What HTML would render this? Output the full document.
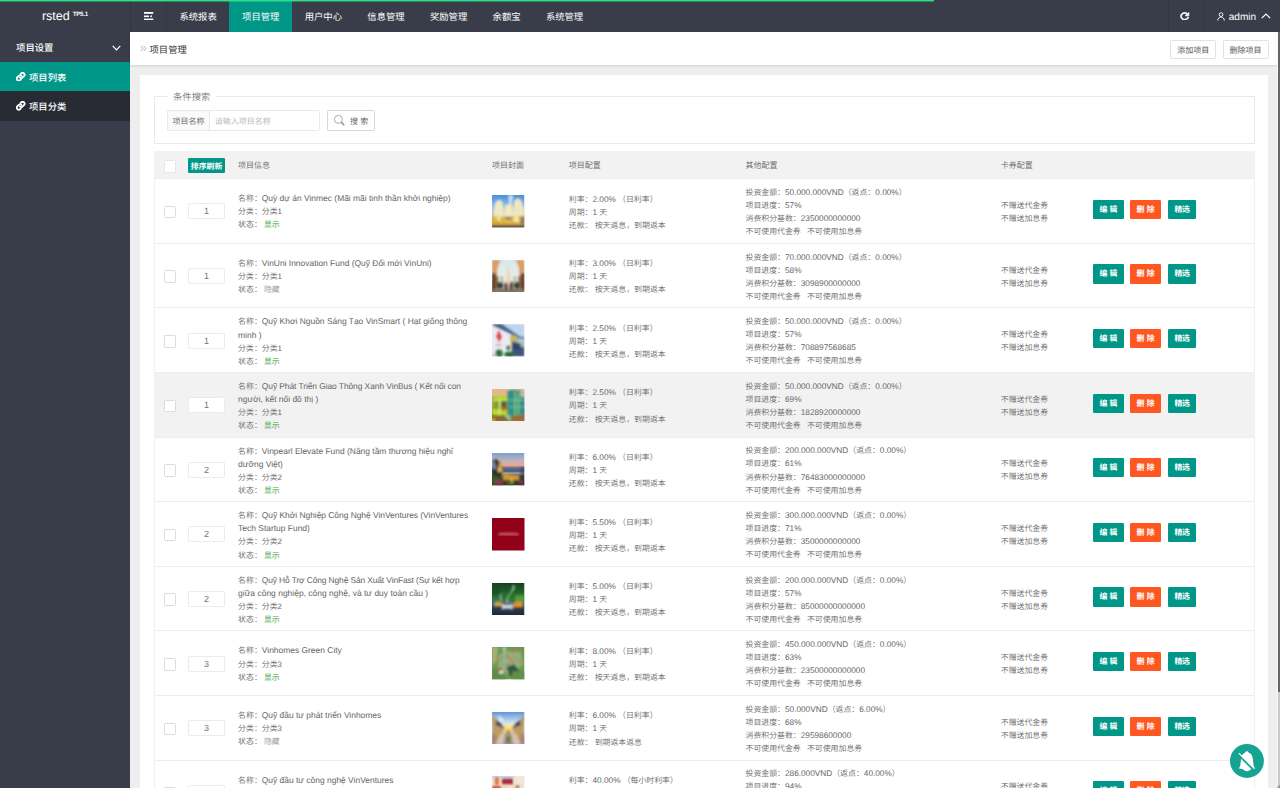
<!DOCTYPE html>
<html lang="zh-CN">
<head>
<meta charset="utf-8">
<title>项目管理</title>
<style>
*{box-sizing:border-box;margin:0;padding:0}
html,body{width:1280px;height:788px;overflow:hidden;background:#eee}
body{position:relative;font-family:"Liberation Sans","Noto Sans CJK SC",sans-serif;font-size:8px;color:#666;line-height:13.33px;-webkit-text-size-adjust:none;text-rendering:geometricPrecision}
a{color:inherit;text-decoration:none}
/* ---------- header ---------- */
#hdr{position:absolute;left:0;top:0;width:1280px;height:32px;background:#393d49;color:#fff}
#prog{position:absolute;left:0;top:0;width:934px;height:2px;background:linear-gradient(#2ee083 0,#2ee083 1px,rgba(46,224,131,.45) 1px,rgba(46,224,131,.45) 2px);z-index:5}
#logo{position:absolute;left:-1.6px;top:0;width:130px;height:32px;line-height:32px;text-align:center;font-size:12.5px;color:#fff}
#logo sup{font-size:6.2px;font-weight:bold;position:relative;top:.9px;left:3px;vertical-align:super;line-height:0;letter-spacing:-.25px}
.vdiv{position:absolute;top:0;width:1px;height:32px;background:rgba(0,0,0,.11)}
#burger{position:absolute;left:144.2px;top:11.8px;width:9.4px;height:8.4px}
#nav{position:absolute;left:166.8px;top:0;height:32px;display:flex}
#nav a{display:block;height:32px;line-height:34.4px;padding:0 12.67px;font-size:9.33px;color:#fff;white-space:nowrap}
#nav a.on{background:#009688}
#refresh{position:absolute;left:1180.4px;top:11.7px;width:9.4px;height:8.6px}
#user{position:absolute;left:1217px;top:0;height:32px;line-height:35px;font-size:10.1px;color:#fff;white-space:nowrap}
#user svg{position:absolute}
/* ---------- sidebar ---------- */
#side{position:absolute;left:0;top:32px;width:130px;height:756px;background:#393d49;color:#fff;font-size:9.33px}
#side .it{position:relative;height:29.4px;line-height:31.4px;padding-left:16.1px;white-space:nowrap;font-weight:500}
#side .it:first-child{height:29.9px;line-height:33.4px}
#side .it.on{line-height:32.4px}
#side .it:nth-child(3){line-height:33.8px}
#side .sub{background:#282b33}
#side .on{background:#009688}
#side .it svg.lk{position:absolute;left:16.3px;top:10.2px;width:9.4px;height:9.4px}
#side .sub span{margin-left:12.9px}
#side .chev{position:absolute;left:112px;top:12.6px;width:9px;height:6px}
/* ---------- main ---------- */
#title{position:absolute;left:130px;top:32px;width:1148px;height:33px;background:#fff;box-shadow:0 1px 2px rgba(0,0,0,.12)}
#title .t{position:absolute;left:19.5px;top:0;line-height:36.8px;font-size:9.33px;color:#333}
#title .arr{position:absolute;left:10px;top:13.3px;width:7px;height:7px}
.tbtn{position:absolute;top:8px;height:19px;line-height:19.4px;border:1px solid #e2e2e2;border-radius:1.3px;background:#fff;color:#555;font-size:8px;text-align:center;white-space:nowrap}
#card{position:absolute;left:140px;top:75px;width:1128px;height:760px;background:#fff;font-weight:350}
#fs{position:absolute;left:13.5px;top:21.3px;width:1101.5px;height:48.2px;border:1px solid #e9e9e9}
#fs .lg{position:absolute;left:13px;top:-6.6px;height:13px;line-height:13px;padding:0 5.5px;background:#fff;font-size:9.33px;color:#777}
#fs .grp{position:absolute;left:12.6px;top:13px;width:152.9px;height:20.6px;border:1px solid #e9e9e9;border-radius:1.3px;background:#fff}
#fs .grp .lb{position:absolute;left:0;top:0;width:42px;height:18.6px;line-height:21.8px;background:#fafafa;border-right:1px solid #e9e9e9;text-align:center;color:#606060;font-size:8px}
#fs .grp .ph{position:absolute;left:46.6px;top:0;line-height:21.6px;color:#b5b5b5;font-size:8px}
#fs .sbtn{position:absolute;left:172.6px;top:13px;width:47.8px;height:20.6px;border:1px solid #d8d8d8;border-radius:1.3px;background:#fff;color:#5a5a5a;font-size:8px;line-height:21.2px}
#fs .sbtn svg{position:absolute;left:6.4px;top:3.8px;width:11px;height:11px}
#fs .sbtn span{position:absolute;left:22px;top:0}
/* ---------- table ---------- */
#tb{position:absolute;left:13.5px;top:76px;width:1101.5px}
#tb:before,#tb:after{content:'';position:absolute;top:0;bottom:0;width:1px;background:#f0f0f0;left:0;z-index:2}
#tb:after{left:auto;right:0}
#th{position:relative;height:28.3px;background:#f2f2f2;line-height:30.8px;color:#666;border-bottom:1px solid #ececec}
#th span{position:absolute;top:0;white-space:nowrap}
.cb{position:absolute;left:10px;width:12.6px;height:12.6px;border:1px solid #dcdcdc;border-radius:1.3px;background:#fff}
#th .cb{top:9px;border-color:#e6e6e6}
#th .sort{position:absolute;left:34.8px;top:7.2px;width:36.6px;height:14.9px;line-height:17.2px;background:#009688;color:#fff;border-radius:1.3px;text-align:center;font-weight:bold;font-size:7.9px;letter-spacing:0}
.row{position:relative;height:64.6px;border-bottom:1px solid #ededed;white-space:nowrap}
.row.hv{background:#f2f2f2}
.row .cb{top:26.6px}
.row .num{position:absolute;left:34.7px;top:24.1px;width:36.4px;height:16px;line-height:15px;font-size:9px;border:1px solid #ebebeb;border-radius:1.3px;background:#fff;text-align:center;color:#747474}
.row .c{position:absolute;top:50%;transform:translateY(-50%);margin-top:1.5px;line-height:13.1px;font-size:7.9px}
.c3{left:84.6px}.c5{left:415.3px}.c6{left:592px}.c7{left:847.3px}
.row .c6{margin-top:.9px}.row .c7{margin-top:.9px}.row .c3{margin-top:1.2px}.row .c5{margin-top:1.5px}
.row .im{position:absolute;left:338.5px;top:15.8px;width:32.5px;height:32.5px;display:block}
.vn{font-size:8.45px}.d{font-size:8.25px}.sp{margin-left:6.2px}
.g{color:#3aa63a}.h{color:#999}
.bt{position:absolute;top:20.5px;height:19.3px;line-height:19.3px;border-radius:1.3px;color:#fff;text-align:center;font-weight:bold;font-size:7.9px}
.b1{left:939.3px;width:31.3px;background:#009688}
.b2{left:976.8px;width:30.6px;background:#ff5722}
.b3{left:1014.3px;width:28.6px;background:#009688;letter-spacing:-.3px}
/* ---------- misc ---------- */
#sbar{position:absolute;left:1277px;top:32px;width:3px;height:756px;background:#c9c9c9;border-left:1px solid #f7f7f7}
#sbar i{position:absolute;left:0;top:0;width:2px;height:660px;background:#666}
#corner{position:absolute;left:1276px;top:784px;width:4px;height:4px;background:linear-gradient(135deg,rgba(122,142,160,0) 45%,#7f93a6 75%)}
#fab{position:absolute;left:1229.9px;top:744px;width:33.9px;height:33.9px;z-index:10}
</style>
</head>
<body>
<div id="hdr">
  <div id="prog"></div>
  <div id="logo">rsted<sup>TP5.1</sup></div>
  <div class="vdiv" style="left:130px"></div>
  <svg id="burger" viewBox="0 0 9.4 8.4"><g fill="#fff"><rect x="0" y="0" width="9.3" height="1.8"/><rect x="0" y="3.5" width="5" height="1.6"/><rect x="0" y="6.6" width="9.3" height="1.7"/><path d="M7.9 3v2.6L5.8 4.3z"/></g></svg>
  <div class="vdiv" style="left:166px"></div>
  <div id="nav"><a>系统报表</a><a class="on">项目管理</a><a>用户中心</a><a>信息管理</a><a>奖励管理</a><a>余额宝</a><a>系统管理</a></div>
  <div class="vdiv" style="left:1168px"></div>
  <svg id="refresh" viewBox="3 3 18 18" preserveAspectRatio="none"><path fill="#fff" stroke="#fff" stroke-width="1.5" stroke-linejoin="round" d="M17.65 6.35C16.2 4.9 14.21 4 12 4c-4.42 0-7.99 3.58-7.99 8s3.57 8 7.99 8c3.73 0 6.84-2.55 7.73-6h-2.08c-.82 2.33-3.04 4-5.65 4-3.31 0-6-2.69-6-6s2.69-6 6-6c1.66 0 3.14.69 4.22 1.78L13 11h7V4l-2.35 2.35z"/></svg>
  <div class="vdiv" style="left:1203px"></div>
  <div id="user">
    <svg style="left:.4px;top:11.6px;width:8.1px;height:9px" viewBox="0 0 9 10"><circle cx="4.5" cy="2.9" r="2.1" fill="none" stroke="#fff" stroke-width="1"/><path d="M0.9 9.6C0.9 7.1 2.4 5.6 4.5 5.6S8.1 7.1 8.1 9.6" fill="none" stroke="#fff" stroke-width="1"/></svg>
    <span style="margin-left:11.7px">admin</span>
    <svg style="left:44px;top:13.2px;width:10px;height:6px" viewBox="0 0 10 6"><path d="M0.8 5.2L5 1l4.2 4.2" fill="none" stroke="#fff" stroke-width="1.2"/></svg>
  </div>
</div>

<div id="side">
  <div class="it">项目设置<svg class="chev" viewBox="0 0 9 6"><path d="M0.7 0.8L4.5 4.8L8.3 0.8" fill="none" stroke="#fff" stroke-width="1.2"/></svg></div>
  <div class="it sub on"><svg class="lk" viewBox="0 0 24 24"><g fill="none" stroke="#fff" stroke-width="4.6" stroke-linecap="round"><path d="M10 14a5 5 0 0 0 7.1 0l3.4-3.4a5 5 0 0 0-7.1-7.1l-1.6 1.6"/><path d="M14 10a5 5 0 0 0-7.1 0l-3.4 3.4a5 5 0 0 0 7.1 7.1l1.6-1.6"/></g></svg><span>项目列表</span></div>
  <div class="it sub"><svg class="lk" viewBox="0 0 24 24"><g fill="none" stroke="#fff" stroke-width="4.6" stroke-linecap="round"><path d="M10 14a5 5 0 0 0 7.1 0l3.4-3.4a5 5 0 0 0-7.1-7.1l-1.6 1.6"/><path d="M14 10a5 5 0 0 0-7.1 0l-3.4 3.4a5 5 0 0 0 7.1 7.1l1.6-1.6"/></g></svg><span>项目分类</span></div>
</div>

<div id="title">
  <svg class="arr" viewBox="0 0 7 7"><path d="M0.6 0.8L3 3.5L0.6 6.2M3.6 0.8L6 3.5L3.6 6.2" fill="none" stroke="#aaa" stroke-width="0.9"/></svg>
  <div class="t">项目管理</div>
  <div class="tbtn" style="left:1040.4px;width:45.5px">添加项目</div>
  <div class="tbtn" style="left:1092.5px;width:46px">删除项目</div>
</div>

<div id="card">
  <div id="fs">
    <div class="lg">条件搜索</div>
    <div class="grp"><div class="lb">项目名称</div><div class="ph">请输入项目名称</div></div>
    <div class="sbtn"><svg viewBox="0 0 11 11"><circle cx="4.4" cy="4.4" r="4" fill="none" stroke="#999" stroke-width="0.8"/><path d="M7.3 7.3L10.3 10.3" stroke="#888" stroke-width="1.3"/></svg><span>搜 索</span></div>
  </div>
  <div id="tb">
    <div id="th"><div class="cb"></div><div class="sort">排序刷新</div><span style="left:84.6px">项目信息</span><span style="left:338.5px">项目封面</span><span style="left:415.3px">项目配置</span><span style="left:592px">其他配置</span><span style="left:847.3px">卡券配置</span></div>
    <div class="row"><div class="cb"></div><div class="num">1</div>
      <div class="c c3">名称：<span class="vn">Quỳ dự án Vinmec (Mãi mãi tinh thần khởi nghiệp)</span><br>分类：分类1<br>状态： <span class="g">显示</span></div>
      <svg class="im" viewBox="0 0 32 32"><defs><linearGradient id="t1" x1="0" y1="0" x2="0" y2="1"><stop offset="0" stop-color="#4a8edb"/><stop offset=".45" stop-color="#a6cdf0"/><stop offset=".68" stop-color="#d8b848"/><stop offset=".92" stop-color="#c99c2e"/><stop offset="1" stop-color="#5d5348"/></linearGradient><filter id="bl"><feGaussianBlur stdDeviation=".85"/></filter><clipPath id="cp"><rect width="32" height="32"/></clipPath></defs><g clip-path="url(#cp)"><rect width="32" height="32" fill="url(#t1)"/><g filter="url(#bl)"><path d="M16 0h5l-2 11h-2z" fill="#d6eaf8" opacity=".85"/><path d="M1 25L3 8l3-3l4 1l3 19z" fill="#efe9c4"/><path d="M12 27l1-17l3-1l4 1l1 17z" fill="#f2ebbc"/><path d="M20 25l2-20l4-2l3 3l3 9v10z" fill="#eee6be"/><path d="M0 21h32v8H0z" fill="#d8aa30" opacity=".7"/><path d="M5 25l2-7l3 8zM21 26l3-8l3 9z" fill="#f5eab0"/><path d="M8 22h3v6H8zM17 23h3v5h-3z" fill="#e2b93c"/><rect x="13" y="22" width="6" height="2" fill="#5f6f9a"/><rect x="0" y="30" width="32" height="2" fill="#4e4a48"/><rect x="28" y="21" width="4" height="8" fill="#6d6a7a" opacity=".7"/></g></g></svg>
      <div class="c c5">利率：<span class="d">2.00%</span> （日利率）<br>周期：<span class="d">1</span> 天<br>还款： 按天返息，到期返本</div>
      <div class="c c6">投资金额：<span class="d">50.000.000VND</span>（返点：<span class="d">0.00%</span>）<br>项目进度：<span class="d">57%</span><br>消费积分基数：<span class="d">2350000000000</span><br>不可使用代金券<span class="sp">不可使用加息券</span></div>
      <div class="c c7">不赠送代金券<br>不赠送加息券</div>
      <div class="bt b1">编 辑</div><div class="bt b2">删 除</div><div class="bt b3">精选</div>
    </div>
    <div class="row"><div class="cb"></div><div class="num">1</div>
      <div class="c c3">名称：<span class="vn">VinUni Innovation Fund (Quỹ Đổi mới VinUni)</span><br>分类：分类1<br>状态： <span class="h">隐藏</span></div>
      <svg class="im" viewBox="0 0 32 32"><defs><linearGradient id="t2" x1="0" y1="0" x2="0" y2="1"><stop offset="0" stop-color="#d6e8ea"/><stop offset=".6" stop-color="#e9efe9"/><stop offset=".82" stop-color="#d9c9b0"/><stop offset="1" stop-color="#7d7466"/></linearGradient></defs><g clip-path="url(#cp)"><rect width="32" height="32" fill="url(#t2)"/><g filter="url(#bl)"><path d="M0 0h9C6 4 5 8 5 14v16H0z" fill="#dc9c66"/><path d="M32 0h-9c3 4 4 8 4 14v16h5z" fill="#dc9c66"/><path d="M0 13h3.5v16H0zM28.5 13H32v16h-3.5z" fill="#523628"/><path d="M4 16h2v12H4zM26 16h2v12h-2z" fill="#74543f"/><path d="M16 4l2 12l1 12h-6l1-12z" fill="#ead6bc"/><path d="M8 16h3v12H8zM21 16h3v12h-3z" fill="#b3ae9e" opacity=".85"/><ellipse cx="8" cy="25" rx="3" ry="3.2" fill="#2e4636"/><ellipse cx="24.5" cy="25" rx="3" ry="3.2" fill="#2e4636"/><rect x="12.6" y="22.5" width="2.4" height="8.5" fill="#1e1816"/><rect x="18" y="21.5" width="2.4" height="9.5" fill="#1e1816"/><rect x="15.3" y="24" width="2.4" height="4.5" fill="#b98a94"/><rect x="0" y="29" width="32" height="3" fill="#7a7164"/></g></g></svg>
      <div class="c c5">利率：<span class="d">3.00%</span> （日利率）<br>周期：<span class="d">1</span> 天<br>还款： 按天返息，到期返本</div>
      <div class="c c6">投资金额：<span class="d">70.000.000VND</span>（返点：<span class="d">0.00%</span>）<br>项目进度：<span class="d">58%</span><br>消费积分基数：<span class="d">3098900000000</span><br>不可使用代金券<span class="sp">不可使用加息券</span></div>
      <div class="c c7">不赠送代金券<br>不赠送加息券</div>
      <div class="bt b1">编 辑</div><div class="bt b2">删 除</div><div class="bt b3">精选</div>
    </div>
    <div class="row"><div class="cb"></div><div class="num">1</div>
      <div class="c c3">名称：<span class="vn">Quỹ Khơi Nguồn Sáng Tạo VinSmart ( Hạt giống thông<br>minh )</span><br>分类：分类1<br>状态： <span class="g">显示</span></div>
      <svg class="im" viewBox="0 0 32 32"><g clip-path="url(#cp)"><rect width="32" height="32" fill="#e8ecf2"/><g filter="url(#bl)"><path d="M10 0h22v14l-6-1z" fill="#bdd5ee"/><path d="M1 0l9 0l17 12l-1.5 1.2l-25-12z" fill="#47648a"/><path d="M18.5 11l13.5 2v19H20z" fill="#3b547f"/><path d="M18 10.5l7 1.5v6l-7-1z" fill="#c9b768"/><path d="M18.5 12h1.2v12h-1.2zM24 13h1.2v10H24z" fill="#c8b050"/><path d="M25.5 13.5l6.5 1v6l-6.5-1.5z" fill="#a9c6e0"/><path d="M26 19.5l6 1v2.5l-6-1z" fill="#cfc474"/><path d="M20 19h8v6h-8z" fill="#2a4470"/><path d="M6.5 6l3.2 6.5l-2.8 5.5l-2.6-6z" fill="#d9494e"/><rect x="4" y="20" width="5" height="1.3" fill="#c98a8a"/><ellipse cx="7" cy="29" rx="3.5" ry="4" fill="#336d40"/><ellipse cx="16" cy="23.5" rx="1.8" ry="2.4" fill="#336d40"/><ellipse cx="17" cy="30" rx="5" ry="3" fill="#316a3b"/><rect x="0" y="30" width="5" height="2" fill="#9fb4d0"/></g></g></svg>
      <div class="c c5">利率：<span class="d">2.50%</span> （日利率）<br>周期：<span class="d">1</span> 天<br>还款： 按天返息，到期返本</div>
      <div class="c c6">投资金额：<span class="d">50.000.000VND</span>（返点：<span class="d">0.00%</span>）<br>项目进度：<span class="d">57%</span><br>消费积分基数：<span class="d">708897568685</span><br>不可使用代金券<span class="sp">不可使用加息券</span></div>
      <div class="c c7">不赠送代金券<br>不赠送加息券</div>
      <div class="bt b1">编 辑</div><div class="bt b2">删 除</div><div class="bt b3">精选</div>
    </div>
    <div class="row hv"><div class="cb"></div><div class="num">1</div>
      <div class="c c3">名称：<span class="vn"><span style="letter-spacing:-0.08px">Quỹ Phát Triển Giao Thông Xanh VinBus ( Kết nối con</span><br>người, kết nối đô thị )</span><br>分类：分类1<br>状态： <span class="g">显示</span></div>
      <svg class="im" viewBox="0 0 32 32"><defs><linearGradient id="t4" x1="0" y1="0" x2="0" y2="1"><stop offset="0" stop-color="#e9b493"/><stop offset=".2" stop-color="#d9c07a"/><stop offset=".3" stop-color="#8f9a8a"/><stop offset=".75" stop-color="#7d6a34"/><stop offset="1" stop-color="#a8782c"/></linearGradient></defs><g clip-path="url(#cp)"><rect width="32" height="32" fill="url(#t4)"/><g filter="url(#bl)"><path d="M15 3l3-2l14 1v24l-16 2z" fill="#2f8f8c"/><path d="M22 3h1.5v24H22zM25.5 3h1.2v24h-1.2z" fill="#9ed65a" opacity=".8"/><path d="M17 10h15v2H17zM17 17h15v1.5H17z" fill="#7fd0a0" opacity=".6"/><path d="M28 2h4v6h-4z" fill="#e9c9b0" opacity=".8"/><path d="M0 10c4-3 10-3 15-2v17l-7 1l-8-1z" fill="#b9e02c"/><path d="M1 12h6v8H1z" fill="#7a8a3a" opacity=".8"/><path d="M8.5 12h6v9h-6z" fill="#5a5a4a"/><path d="M9.5 18h4v3h-4z" fill="#d86a24"/><path d="M7 10h1.2v15H7z" fill="#e6f29a"/><path d="M12 26l4-1l6 5l-5 1z" fill="#7fd6a6"/><path d="M0 26h12l4 6H0z" fill="#8a6a2e"/><path d="M17 27l15-2v7H20z" fill="#9a6c34"/><path d="M0 29h3v3H0z" fill="#d6a82a"/></g></g></svg>
      <div class="c c5">利率：<span class="d">2.50%</span> （日利率）<br>周期：<span class="d">1</span> 天<br>还款： 按天返息，到期返本</div>
      <div class="c c6">投资金额：<span class="d">50.000.000VND</span>（返点：<span class="d">0.00%</span>）<br>项目进度：<span class="d">69%</span><br>消费积分基数：<span class="d">1828920000000</span><br>不可使用代金券<span class="sp">不可使用加息券</span></div>
      <div class="c c7">不赠送代金券<br>不赠送加息券</div>
      <div class="bt b1">编 辑</div><div class="bt b2">删 除</div><div class="bt b3">精选</div>
    </div>
    <div class="row"><div class="cb"></div><div class="num">2</div>
      <div class="c c3">名称：<span class="vn">Vinpearl Elevate Fund (Nâng tầm thương hiệu nghỉ<br>dưỡng Việt)</span><br>分类：分类2<br>状态： <span class="g">显示</span></div>
      <svg class="im" viewBox="0 0 32 32"><defs><linearGradient id="t5" x1="0" y1="0" x2="0" y2="1"><stop offset="0" stop-color="#7fa2cc"/><stop offset=".22" stop-color="#b7b2c4"/><stop offset=".38" stop-color="#f0a88a"/><stop offset=".46" stop-color="#5f6e90"/><stop offset=".56" stop-color="#4a587a"/><stop offset=".62" stop-color="#9aa4c0"/><stop offset=".7" stop-color="#3a3a2c"/><stop offset="1" stop-color="#2e3020"/></linearGradient></defs><g clip-path="url(#cp)"><rect width="32" height="32" fill="url(#t5)"/><g filter="url(#bl)"><path d="M0 8l4-2l4 3l3 9l-3 6H0z" fill="#2a2e36"/><path d="M0 9l3-1l2 8H0z" fill="#7f93b8" opacity=".8"/><path d="M7.5 6l1.5 6l2 7H5l1.5-7z" fill="#c99a3a"/><path d="M7.8 12l1.5 6H6.5z" fill="#f2c65a"/><path d="M10 21c3-2 6-1 8 0s7-1 9 1v5H11z" fill="#d9a23a" opacity=".9"/><path d="M18 24h3v6h-3z" fill="#e0b04a" opacity=".8"/><path d="M0 22l8 2l4 8H0z" fill="#3f5a2a"/><path d="M3 27h8v5H3z" fill="#9a3050" opacity=".8"/><path d="M14 29h8v3h-8z" fill="#4a6a30"/><path d="M26 26h6v6h-6z" fill="#6a3a48" opacity=".8"/><path d="M28 14h4v8h-4z" fill="#3a4660" opacity=".7"/></g></g></svg>
      <div class="c c5">利率：<span class="d">6.00%</span> （日利率）<br>周期：<span class="d">1</span> 天<br>还款： 按天返息，到期返本</div>
      <div class="c c6">投资金额：<span class="d">200.000.000VND</span>（返点：<span class="d">0.00%</span>）<br>项目进度：<span class="d">61%</span><br>消费积分基数：<span class="d">76483000000000</span><br>不可使用代金券<span class="sp">不可使用加息券</span></div>
      <div class="c c7">不赠送代金券<br>不赠送加息券</div>
      <div class="bt b1">编 辑</div><div class="bt b2">删 除</div><div class="bt b3">精选</div>
    </div>
    <div class="row"><div class="cb"></div><div class="num">2</div>
      <div class="c c3">名称：<span class="vn"><span style="letter-spacing:-0.03px">Quỹ Khởi Nghiệp Công Nghệ VinVentures (VinVentures</span><br>Tech Startup Fund)</span><br>分类：分类2<br>状态： <span class="g">显示</span></div>
      <svg class="im" viewBox="0 0 32 32"><rect width="32" height="32" fill="#92001a"/><g filter="url(#bl)"><rect x="6.5" y="15" width="19.5" height="1.9" fill="#e0917e" opacity=".8"/><rect x="9" y="13.6" width="14" height=".6" fill="#b84a4a" opacity=".5"/></g></svg>
      <div class="c c5">利率：<span class="d">5.50%</span> （日利率）<br>周期：<span class="d">1</span> 天<br>还款： 按天返息，到期返本</div>
      <div class="c c6">投资金额：<span class="d">300.000.000VND</span>（返点：<span class="d">0.00%</span>）<br>项目进度：<span class="d">71%</span><br>消费积分基数：<span class="d">3500000000000</span><br>不可使用代金券<span class="sp">不可使用加息券</span></div>
      <div class="c c7">不赠送代金券<br>不赠送加息券</div>
      <div class="bt b1">编 辑</div><div class="bt b2">删 除</div><div class="bt b3">精选</div>
    </div>
    <div class="row"><div class="cb"></div><div class="num">2</div>
      <div class="c c3">名称：<span class="vn"><span style="letter-spacing:-0.13px">Quỹ Hỗ Trợ Công Nghệ Sản Xuất VinFast (Sự kết hợp</span><br><span style="letter-spacing:0.02px">giữa công nghiệp, công nghệ, và tư duy toàn cầu )</span></span><br>分类：分类2<br>状态： <span class="g">显示</span></div>
      <svg class="im" viewBox="0 0 32 32"><defs><linearGradient id="t7" x1="0" y1="0" x2="0" y2="1"><stop offset="0" stop-color="#16401f"/><stop offset=".5" stop-color="#2f7a34"/><stop offset=".62" stop-color="#3a6a6a"/><stop offset=".78" stop-color="#2a3c50"/><stop offset="1" stop-color="#1c2836"/></linearGradient></defs><g clip-path="url(#cp)"><rect width="32" height="32" fill="url(#t7)"/><g filter="url(#bl)"><path d="M22 2c2 3-1 6-3 8s-4 5-3 9l-2 0c0-5 2-7 4-10s2-5 2-7z" fill="#8fd098" opacity=".75"/><path d="M23 12h9v8h-9z" fill="#6aa83a" opacity=".7"/><path d="M0 4h8v8H0z" fill="#1a4a24" opacity=".8"/><path d="M8 11h1.2v7H8z" fill="#9fc0c0"/><path d="M0 17h6v4H0z" fill="#3a6a9a" opacity=".8"/><path d="M2.5 20c1-2 6-2 7 0l.5 3h-8z" fill="#d6a62c"/><path d="M21 20c1-2.5 8-2.5 9 0l.5 4h-10z" fill="#e0902c"/><path d="M10 21c1-3 9-3 10 0l.5 5H9.5z" fill="#cfd8e6"/><path d="M11 19.5h8v2h-8z" fill="#2a3446"/><path d="M8 18h6v1.5H8z" fill="#b84a3a" opacity=".8"/><path d="M11 25h8v1.5h-8z" fill="#3a4458"/><path d="M22 24h8v1.5h-8z" fill="#3a3020"/></g></g></svg>
      <div class="c c5">利率：<span class="d">5.00%</span> （日利率）<br>周期：<span class="d">1</span> 天<br>还款： 按天返息，到期返本</div>
      <div class="c c6">投资金额：<span class="d">200.000.000VND</span>（返点：<span class="d">0.00%</span>）<br>项目进度：<span class="d">57%</span><br>消费积分基数：<span class="d">85000000000000</span><br>不可使用代金券<span class="sp">不可使用加息券</span></div>
      <div class="c c7">不赠送代金券<br>不赠送加息券</div>
      <div class="bt b1">编 辑</div><div class="bt b2">删 除</div><div class="bt b3">精选</div>
    </div>
    <div class="row"><div class="cb"></div><div class="num">3</div>
      <div class="c c3">名称：<span class="vn">Vinhomes Green City</span><br>分类：分类3<br>状态： <span class="g">显示</span></div>
      <svg class="im" viewBox="0 0 32 32"><g clip-path="url(#cp)"><rect width="32" height="32" fill="#6f9856"/><g filter="url(#bl)"><path d="M0 0h6l-2 14l-4 4z" fill="#b4b87a" opacity=".8"/><path d="M10 0h4l-2 10z" fill="#c8dcc0" opacity=".7"/><path d="M6 8l8-4l14 1l3 12l-8 6l-10 3l-7-6z" fill="#9ab88a" opacity=".75"/><path d="M14 20l8-3l6 8l-10 4z" fill="#2f5a44"/><path d="M0 22h10l4 10H0z" fill="#5f8a44"/><path d="M20 24h12v8H20z" fill="#64904a"/><g fill="#d8584a"><circle cx="6" cy="13" r="1.3"/><circle cx="9.5" cy="11" r="1"/><circle cx="15" cy="9" r="1.2"/><circle cx="20" cy="5" r="1.2"/><circle cx="25" cy="4.5" r="1.3"/><circle cx="18" cy="11" r="1.2"/><circle cx="24" cy="12" r="1"/><circle cx="28" cy="14" r="1.3"/><circle cx="20" cy="15" r="1.2"/><circle cx="16" cy="17.5" r="1.3"/><circle cx="8" cy="21" r="1.6"/><circle cx="11" cy="24" r="1.2"/></g><circle cx="12" cy="14" r="1.5" fill="#7ac0d8"/><path d="M7 24l4-1v3H7z" fill="#e8f0e8"/></g></g></svg>
      <div class="c c5">利率：<span class="d">8.00%</span> （日利率）<br>周期：<span class="d">1</span> 天<br>还款： 按天返息，到期返本</div>
      <div class="c c6">投资金额：<span class="d">450.000.000VND</span>（返点：<span class="d">0.00%</span>）<br>项目进度：<span class="d">63%</span><br>消费积分基数：<span class="d">23500000000000</span><br>不可使用代金券<span class="sp">不可使用加息券</span></div>
      <div class="c c7">不赠送代金券<br>不赠送加息券</div>
      <div class="bt b1">编 辑</div><div class="bt b2">删 除</div><div class="bt b3">精选</div>
    </div>
    <div class="row"><div class="cb"></div><div class="num">3</div>
      <div class="c c3">名称：<span class="vn">Quỹ đầu tư phát triển Vinhomes</span><br>分类：分类3<br>状态： <span class="h">隐藏</span></div>
      <svg class="im" viewBox="0 0 32 32"><defs><linearGradient id="t9" x1="0" y1="0" x2="0" y2="1"><stop offset="0" stop-color="#5f98d8"/><stop offset=".3" stop-color="#c4dcf0"/><stop offset=".5" stop-color="#fff6dc"/><stop offset=".7" stop-color="#d8c0b0"/><stop offset="1" stop-color="#b0a0a4"/></linearGradient><radialGradient id="s9" cx=".5" cy=".5" r=".5"><stop offset="0" stop-color="#ffd23a"/><stop offset=".5" stop-color="#ffe27a" stop-opacity=".8"/><stop offset="1" stop-color="#fff0c0" stop-opacity="0"/></radialGradient></defs><g clip-path="url(#cp)"><rect width="32" height="32" fill="url(#t9)"/><g filter="url(#bl)"><path d="M6 3l6 5l-4 1z" fill="#fff" opacity=".8"/><path d="M0 3l4 4l5 5l4 6v8l-13 5z" fill="#b89c70"/><path d="M32 3l-4 4l-5 5l-4 6v8l13 5z" fill="#b89c70"/><path d="M4 8l5 3v4l-5-2zM28 8l-5 3v4l5-2z" fill="#4a4a52"/><path d="M9 12l4 3v3l-4-2zM23 12l-4 3v3l4-2z" fill="#5a5650"/><circle cx="16" cy="17" r="7" fill="url(#s9)"/><path d="M5 18l5 2v6l-5 1zM27 18l-5 2v6l5 1z" fill="#c8a02c" opacity=".85"/><path d="M14 18h4l2 14h-8z" fill="#8a8478" opacity=".8"/><path d="M14.5 24h3v6h-3z" fill="#6a7a30"/><path d="M8 22l5-3l-3 13H4z" fill="#d6c2ba"/><path d="M24 22l-5-3l3 13h6z" fill="#d6c2ba"/><path d="M0 22h4v10H0zM28 22h4v10h-4z" fill="#a87a7a" opacity=".8"/></g></g></svg>
      <div class="c c5">利率：<span class="d">6.00%</span> （日利率）<br>周期：<span class="d">1</span> 天<br>还款： 到期返本返息</div>
      <div class="c c6">投资金额：<span class="d">50.000VND</span>（返点：<span class="d">6.00%</span>）<br>项目进度：<span class="d">68%</span><br>消费积分基数：<span class="d">29598600000</span><br>不可使用代金券<span class="sp">不可使用加息券</span></div>
      <div class="c c7">不赠送代金券<br>不赠送加息券</div>
      <div class="bt b1">编 辑</div><div class="bt b2">删 除</div><div class="bt b3">精选</div>
    </div>
    <div class="row"><div class="cb"></div><div class="num">3</div>
      <div class="c c3">名称：<span class="vn">Quỹ đầu tư công nghệ VinVentures</span><br>分类：分类3<br>状态： <span class="g">显示</span></div>
      <svg class="im" viewBox="0 0 32 32"><g clip-path="url(#cp)"><rect width="32" height="32" fill="#f3e2cc"/><g filter="url(#bl)"><rect width="32" height="2" fill="#b9c8e6"/><rect x="22" y="0" width="10" height="6" fill="#f6e6d8"/><ellipse cx="4.8" cy="5" rx="2" ry="4" fill="#d8481c"/><ellipse cx="4.8" cy="5" rx="1" ry="2.5" fill="#f0903a"/><rect x="10" y="2.5" width="10.5" height="5.5" fill="#96081c"/><rect x="11.5" y="4.5" width="7.5" height="1.5" fill="#c04a56"/><rect x="0" y="10" width="9" height="3" fill="#c8443a"/><path d="M23 12c0-4 4-4 4 0z" fill="#7a6a5a"/><rect x="13" y="9" width="1" height="3" fill="#d8b090"/></g></g></svg>
      <div class="c c5">利率：<span class="d">40.00%</span> （每小时利率）<br>周期：<span class="d">1</span> 天<br>还款： 到期返本返息</div>
      <div class="c c6">投资金额：<span class="d">286.000VND</span>（返点：<span class="d">40.00%</span>）<br>项目进度：<span class="d">94%</span><br>消费积分基数：<span class="d">1430000000</span><br>不可使用代金券<span class="sp">不可使用加息券</span></div>
      <div class="c c7">不赠送代金券<br>不赠送加息券</div>
      <div class="bt b1">编 辑</div><div class="bt b2">删 除</div><div class="bt b3">精选</div>
    </div>
  </div>
</div>

<div id="sbar"><i></i></div>
<div id="corner"></div>
<svg id="fab" viewBox="0 0 50 50"><circle cx="25" cy="25" r="25" fill="#17a391"/><path d="M25 10.6c-1.3 0-2.2 .9-2.3 2C18.5 14 16.6 18 16.2 23l-1 8.5c-.3 2-1.5 3.3-2.4 4.5c2 .6 4 .2 6 1.3c1.8 1 3.5 2.8 6.2 2.8s4.4-1.8 6.2-2.8c2-1.1 4-.7 6-1.3c-.9-1.2-2.1-2.5-2.4-4.5l-1-8.5c-.4-5-2.3-9-6.5-10.4c-.1-1.1-1-2-2.3-2z" fill="#fff"/><path d="M10.5 14.2L36.5 40.2" stroke="#17a391" stroke-width="2.6"/><path d="M13 13.4L21 21.4" stroke="#fff" stroke-width="1.7"/></svg>
</body>
</html>
